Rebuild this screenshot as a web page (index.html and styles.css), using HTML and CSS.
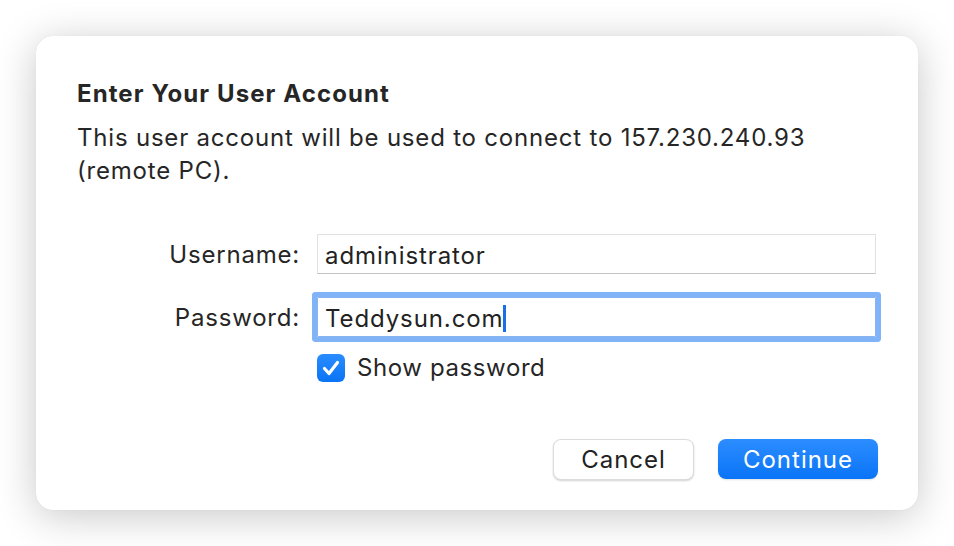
FILE: index.html
```html
<!DOCTYPE html>
<html>
<head>
<meta charset="utf-8">
<link rel="stylesheet" href="styles.css">
</head>
<body>
<div class="dialog">
  <h1 class="title">Enter Your User Account</h1>
  <p class="desc">This user account will be used to connect to 157.230.240.93 (remote PC).</p>
  <div class="form">
    <label class="label">Username:</label>
    <div class="field">administrator</div>
    <label class="label">Password:</label>
    <div class="field focus">Teddysun.com<span class="caret"></span></div>
    <div></div>
    <div class="check-row">
      <span class="checkbox"><svg viewBox="0 0 28 28" width="28" height="28"><path d="M7.5 14.5 L12 19.5 L20.5 8.5" fill="none" stroke="#fff" stroke-width="3.2" stroke-linecap="round" stroke-linejoin="round"/></svg></span>
      <span class="check-label">Show password</span>
    </div>
  </div>
  <div class="buttons">
    <button class="btn cancel">Cancel</button>
    <button class="btn primary">Continue</button>
  </div>
</div>
</body>
</html>
```
FILE: styles.css
```css
html, body {
  margin: 0;
  padding: 0;
  background: #ffffff;
}
body {
  width: 954px;
  height: 546px;
  overflow: hidden;
  font-family: Inter, "Noto Sans", sans-serif;
  color: #262626;
  letter-spacing: 0.8px;
}
.dialog {
  box-sizing: border-box;
  margin: 36px 0 0 36px;
  width: 882px;
  height: 474px;
  background: #fff;
  border-radius: 17px;
  box-shadow: 0 6px 40px rgba(0, 0, 0, 0.22), 0 0 1px rgba(0,0,0,0.1);
  padding: 77px 40px 0 41px;
}
.title {
  margin: 0;
  font-size: 24px;
  font-weight: 700;
  line-height: 30px;
  margin-top: -34px;
  letter-spacing: 1.1px;
}
.desc {
  margin: 12px 0 0 0;
  font-size: 24px;
  line-height: 33px;
  font-weight: 400;
  width: 780px;
}
.form {
  display: grid;
  grid-template-columns: 222px 559px;
  column-gap: 18px;
  row-gap: 23px;
  margin-top: 47px;
  align-items: center;
}
.label {
  text-align: right;
  font-size: 24px;
  margin-right: -1px;
  padding-top: 1px;
}
.field {
  box-sizing: border-box;
  height: 40px;
  border: 1px solid #e2e2e2;
  border-bottom-color: #c4c4c4;
  padding: 3px 7px 0 7px;
  font-size: 24px;
  line-height: 35px;
  color: #222;
  display: flex;
  align-items: center;
  letter-spacing: 0.9px;
}
.field.focus {
  border: 1px solid #8ab4f0;
  box-shadow: 0 0 0 5px #80b3f8;
  border-radius: 1px;
}
.caret {
  display: inline-block;
  width: 3px;
  height: 27px;
  background: #1a6fe6;
  margin-left: 0;
}
.check-row {
  display: flex;
  align-items: center;
  gap: 12px;
  margin-top: -7px;
}
.checkbox {
  width: 28px;
  height: 28px;
  border-radius: 6px;
  background: linear-gradient(#2a8cff, #0a74f5);
  display: flex;
}
.check-label {
  font-size: 24px;
  letter-spacing: 0.6px;
}
.buttons {
  display: flex;
  justify-content: flex-end;
  gap: 24px;
  margin-top: 57px;
}
.btn {
  font-family: Inter, "Noto Sans", sans-serif;
  font-size: 24px;
  letter-spacing: 1px;
  height: 41px;
  border-radius: 8px;
  padding: 0;
  cursor: default;
}
.cancel {
  width: 141px;
  background: #fff;
  color: #222;
  border: 1px solid #dcdcdc;
  box-shadow: 0 1px 2px rgba(0,0,0,0.18);
}
.primary {
  width: 160px;
  height: 40px;
  color: #fff;
  border: none;
  background: linear-gradient(#2c8dff, #0a74f7);
  box-shadow: 0 1px 2px rgba(0,0,0,0.12);
}
```
